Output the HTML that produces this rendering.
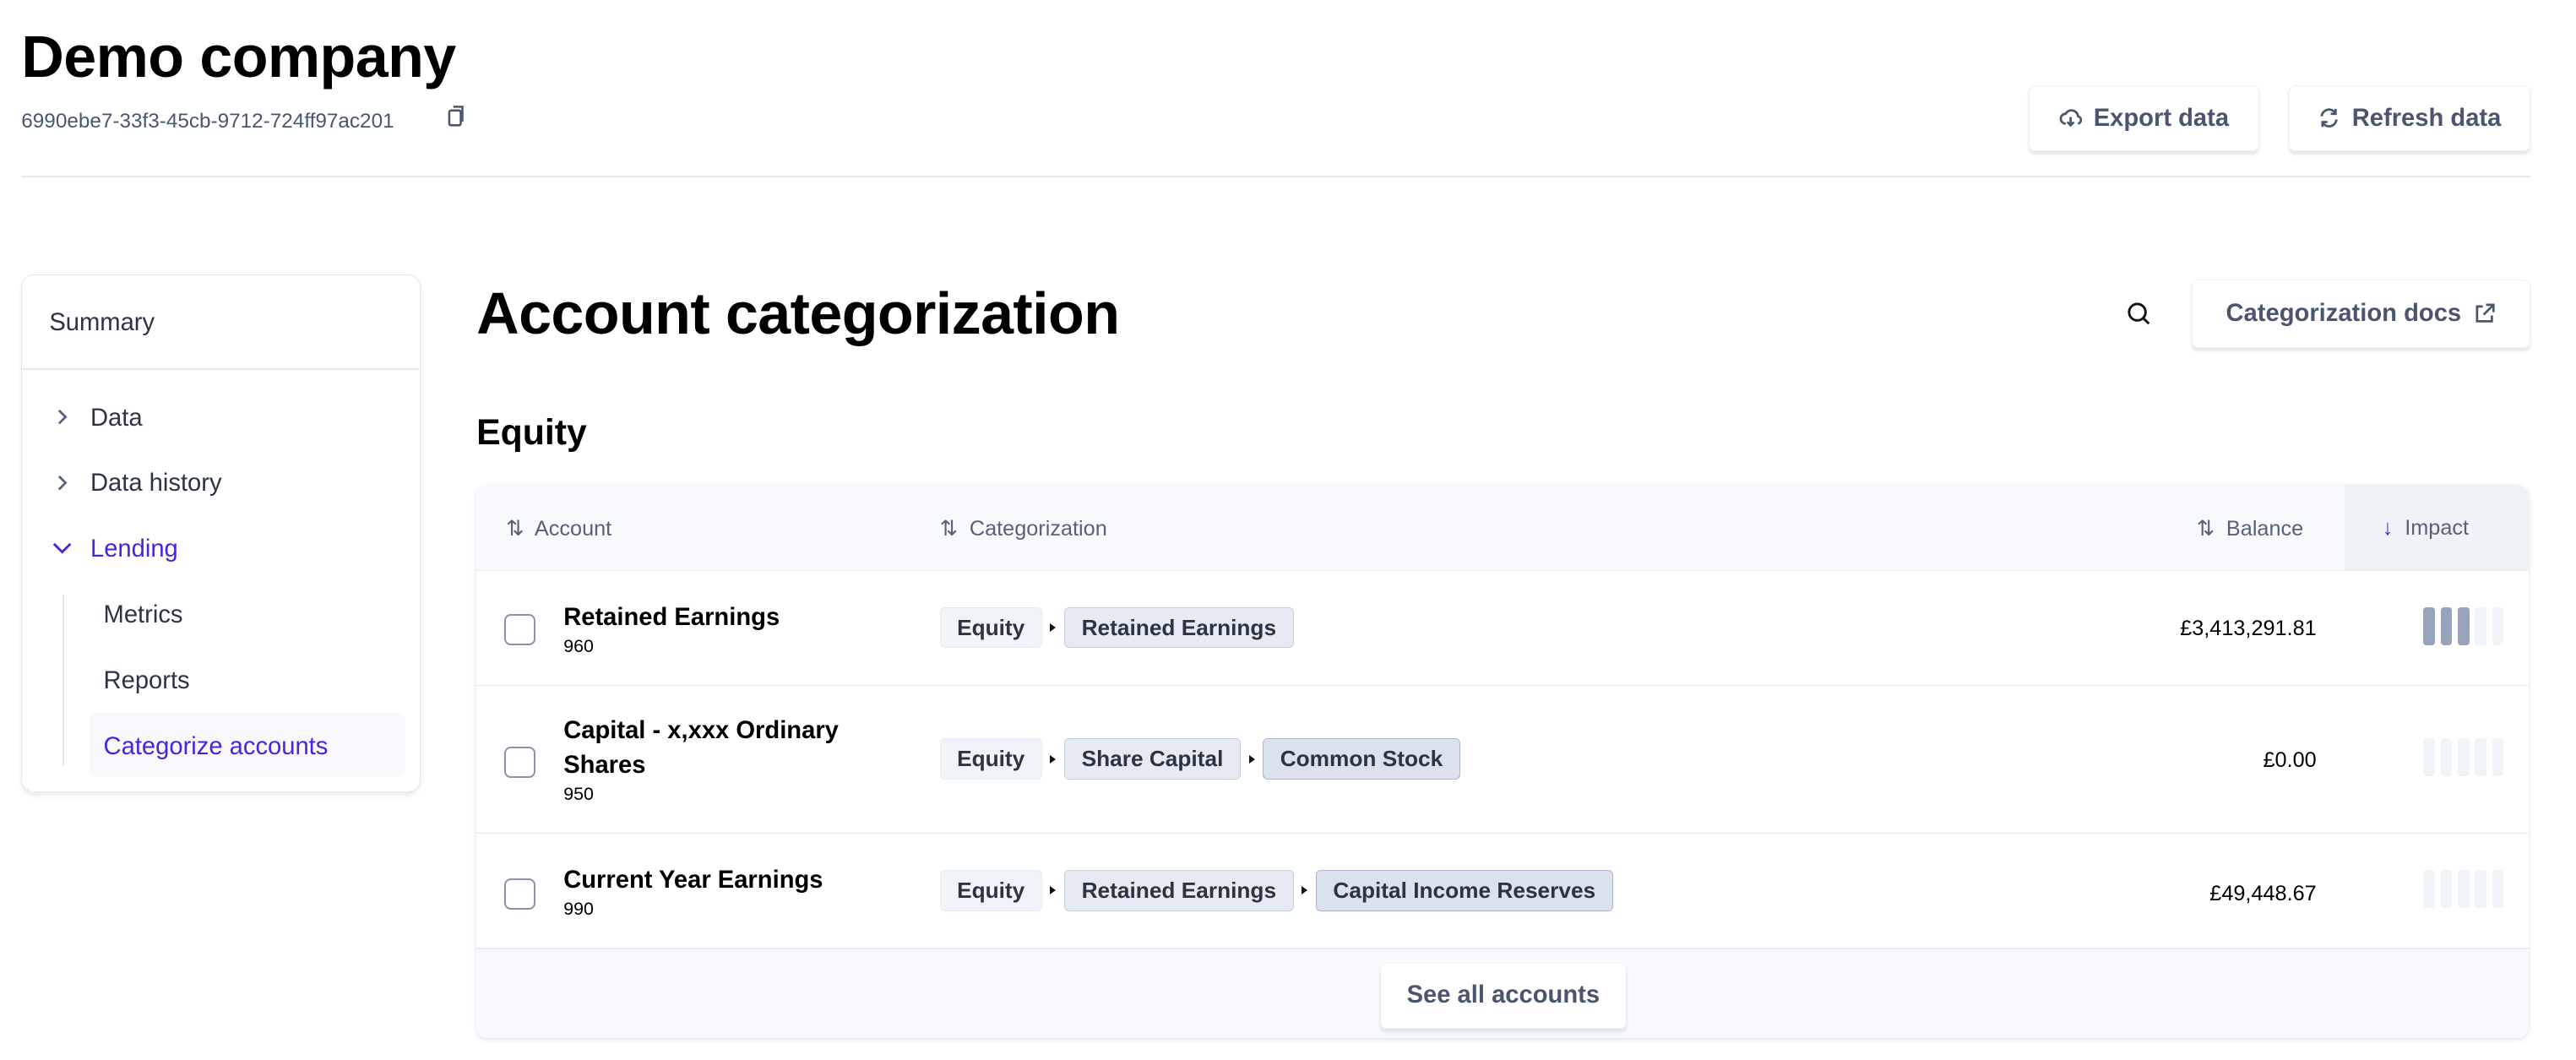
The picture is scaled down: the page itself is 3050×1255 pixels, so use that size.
<!DOCTYPE html>
<html><head><meta charset="utf-8"><style>
html{zoom:1.9452}
body{margin:0;width:1568px;height:645px;background:#fff;font-family:"Liberation Sans",sans-serif;color:#000;position:relative;overflow:hidden}
.a{position:absolute}
.btn{position:absolute;background:#fff;border:1px solid #eef1f6;border-radius:4px;box-shadow:0 2px 2px rgba(40,60,100,.12);color:#4a5670;font-weight:bold;font-size:15px;display:flex;align-items:center;justify-content:center;gap:7px;box-sizing:border-box}
.nav{position:absolute;font-size:15px;color:#2c3444}
.chip{display:inline-block;height:24px;line-height:24px;padding:0 10px;border-radius:3px;font-size:13.5px;font-weight:bold;color:#2c3444;background:#f0f3f8;border:1px solid #e6eaf1;vertical-align:middle}
.c2{background:#e6ebf3;border-color:#c2ccdb}
.c3{background:#dbe2ee;border-color:#aab6c9}
.tri{display:inline-block;width:0;height:0;border-left:4px solid #111;border-top:3px solid transparent;border-bottom:3px solid transparent;margin:0 5px;vertical-align:middle}
.row{position:absolute;left:290px;width:1249px;border-top:1px solid #e6eaf2}
.cb{position:absolute;left:17px;width:17px;height:17px;border:1.5px solid #8994a8;border-radius:4px}
.nm{position:absolute;left:53px;font-size:15px;font-weight:bold;line-height:21px}
.num{font-size:11px;font-weight:normal;display:block;line-height:14px}
.cat{position:absolute;left:282px}
.bal{position:absolute;right:129px;font-size:13px}
.bars{position:absolute;left:1185px;display:flex;gap:3.5px}
.bars i{width:7px;height:23px;border-radius:2px;background:#f0f3f8}
.bars i.f{background:#97a4bb}
.th{position:absolute;top:19px;font-size:13px;color:#56627a}
</style></head><body>
<div class="a" style="left:13px;top:14px;font-size:36px;font-weight:bold;letter-spacing:-0.3px">Demo company</div>
<div class="a" style="left:13px;top:67px;font-size:12.5px;color:#4a5670">6990ebe7-33f3-45cb-9712-724ff97ac201</div>
<svg class="a" style="left:272px;top:64px" width="13" height="14" viewBox="0 0 13 14"><rect x="1.5" y="3.5" width="7" height="9" fill="none" stroke="#4a5670" stroke-width="1.3" rx="1"/><path d="M4 1.2h5.5v9" fill="none" stroke="#4a5670" stroke-width="1.3"/></svg>
<div class="btn" style="left:1235px;top:52px;width:140px;height:40px"><svg width="14" height="14" viewBox="0 0 14 14"><path d="M4 10.5a3 3 0 0 1 0-6 4 4 0 0 1 7.5 1.5 2.3 2.3 0 0 1 0 4.5M7 6.5v5M5 9.5l2 2 2-2" fill="none" stroke="#4a5670" stroke-width="1.4"/></svg>Export data</div>
<div class="btn" style="left:1393px;top:52px;width:147px;height:40px"><svg width="14" height="14" viewBox="0 0 14 14"><path d="M2.5 6a4.5 4.5 0 0 1 8.3-2M11.5 8a4.5 4.5 0 0 1-8.3 2M11 1.5v3h-3M3 12.5v-3h3" fill="none" stroke="#4a5670" stroke-width="1.4"/></svg>Refresh data</div>
<div class="a" style="left:13px;top:107px;width:1527px;height:1px;background:#e5e9f2"></div>

<div class="a" style="left:13px;top:167px;width:243px;height:315px;border:1px solid #e3e8f0;border-radius:8px;box-shadow:0 2px 3px rgba(40,60,100,.1);box-sizing:border-box"></div>
<div class="nav" style="left:30px;top:188px">Summary</div>
<div class="a" style="left:14px;top:224px;width:241px;height:1px;background:#e3e8f0"></div>
<svg class="a" style="left:33px;top:248px" width="10" height="12"><path d="M3 2l4 4-4 4" fill="none" stroke="#56627a" stroke-width="1.4"/></svg>
<div class="nav" style="left:55px;top:246px">Data</div>
<svg class="a" style="left:33px;top:288px" width="10" height="12"><path d="M3 2l4 4-4 4" fill="none" stroke="#56627a" stroke-width="1.4"/></svg>
<div class="nav" style="left:55px;top:286px">Data history</div>
<svg class="a" style="left:31px;top:329px" width="14" height="10"><path d="M2 2l5 5 5-5" fill="none" stroke="#4327e0" stroke-width="1.5"/></svg>
<div class="nav" style="left:55px;top:326px;color:#4327e0">Lending</div>
<div class="a" style="left:38px;top:362px;width:1px;height:104px;background:#dfe4ee"></div>
<div class="nav" style="left:63px;top:366px">Metrics</div>
<div class="nav" style="left:63px;top:406px">Reports</div>
<div class="a" style="left:54px;top:434px;width:193px;height:39px;background:#f7f8fc;border-radius:5px"></div>
<div class="nav" style="left:63px;top:446px;color:#4327e0">Categorize accounts</div>

<div class="a" style="left:290px;top:170px;font-size:36px;font-weight:bold;letter-spacing:-0.3px">Account categorization</div>
<svg class="a" style="left:1294px;top:183px" width="16" height="16" viewBox="0 0 16 16"><circle cx="7" cy="7" r="5" fill="none" stroke="#111" stroke-width="1.5"/><path d="M10.5 10.5l3.5 3.5" stroke="#111" stroke-width="1.5"/></svg>
<div class="btn" style="left:1334px;top:170px;width:206px;height:42px">Categorization docs <svg width="14" height="14" viewBox="0 0 14 14"><path d="M6 2.5H2.5v9h9V8M8 1.5h4.5V6M12.5 1.5 6.5 7.5" fill="none" stroke="#4a5670" stroke-width="1.4"/></svg></div>
<div class="a" style="left:290px;top:251px;font-size:22px;font-weight:bold">Equity</div>

<div class="a" style="left:290px;top:295px;width:1249px;height:337px;border-radius:7px;box-shadow:0 1px 3px rgba(40,60,100,.15);overflow:hidden">
<div class="a" style="left:0;top:0;width:1249px;height:52px;background:#f7f9fc"></div>
<div class="a" style="left:1137px;top:0;width:112px;height:52px;background:#eff2f7"></div>
<div class="a" style="left:0;top:282px;width:1249px;height:55px;background:#f7f9fc"></div>
</div>
<div class="a" style="left:290px;top:295px;width:1249px;height:52px">
<div class="th" style="left:18px">⇅&nbsp; Account</div>
<div class="th" style="left:282px">⇅&nbsp; Categorization</div>
<div class="th" style="left:1047px">⇅&nbsp; Balance</div>
<div class="th" style="left:1160px"><span style="color:#4327e0">↓</span>&nbsp; Impact</div>
</div>

<div class="row" style="top:347px;height:70px">
<div class="cb" style="top:26px"></div>
<div class="nm" style="top:18px">Retained Earnings<span class="num">960</span></div>
<div class="cat" style="top:22px"><span class="chip">Equity</span><span class="tri"></span><span class="chip c2">Retained Earnings</span></div>
<div class="bal" style="top:28px">£3,413,291.81</div>
<div class="bars" style="top:22px"><i class="f"></i><i class="f"></i><i class="f"></i><i></i><i></i></div>
</div>
<div class="row" style="top:417px;height:90px">
<div class="cb" style="top:37px"></div>
<div class="nm" style="top:17px">Capital - x,xxx Ordinary<br>Shares<span class="num">950</span></div>
<div class="cat" style="top:32px"><span class="chip">Equity</span><span class="tri"></span><span class="chip c2">Share Capital</span><span class="tri"></span><span class="chip c3">Common Stock</span></div>
<div class="bal" style="top:38px">£0.00</div>
<div class="bars" style="top:32px"><i></i><i></i><i></i><i></i><i></i></div>
</div>
<div class="row" style="top:507px;height:70px">
<div class="cb" style="top:27px"></div>
<div class="nm" style="top:18px">Current Year Earnings<span class="num">990</span></div>
<div class="cat" style="top:22px"><span class="chip">Equity</span><span class="tri"></span><span class="chip c2">Retained Earnings</span><span class="tri"></span><span class="chip c3">Capital Income Reserves</span></div>
<div class="bal" style="top:29px">£49,448.67</div>
<div class="bars" style="top:22px"><i></i><i></i><i></i><i></i><i></i></div>
</div>
<div class="a" style="left:290px;top:577px;width:1249px;height:1px;background:#e6eaf2"></div>
<div class="btn" style="left:840px;top:586px;width:150px;height:40px">See all accounts</div>
</body></html>
